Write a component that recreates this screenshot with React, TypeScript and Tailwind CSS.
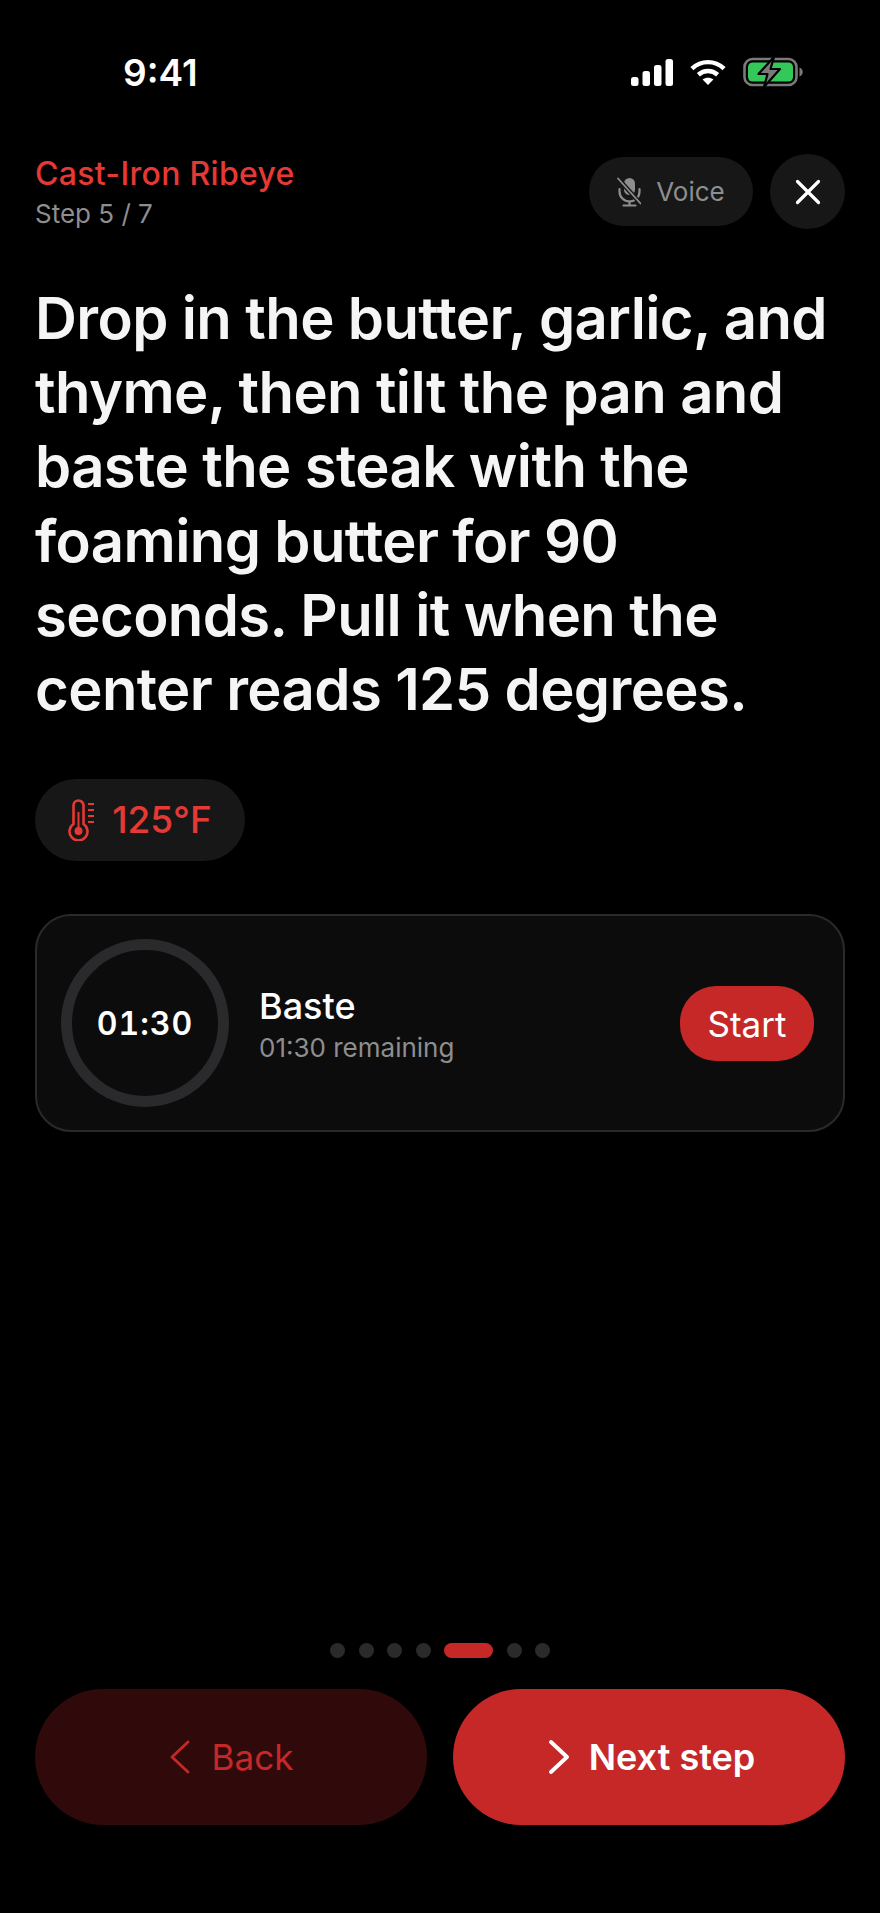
import React from 'react';

const font = { fontFamily: 'Inter, sans-serif' };

const SignalIcon = () => (
  <svg width="42" height="27" viewBox="0 0 42 27" fill="#fff">
    <rect x="0" y="18" width="7.500" height="9" rx="2.500" />
    <rect x="11.500" y="12" width="7.500" height="15" rx="2.500" />
    <rect x="23" y="6" width="7.500" height="21" rx="2.500" />
    <rect x="34.500" y="0" width="7.500" height="27" rx="2.500" />
  </svg>
);

const WifiIcon = () => (
  <svg width="36" height="27" viewBox="0 0 37 27" fill="none" stroke="#fff" strokeWidth="4.600">
    <path d="M2 9.500C11.500 .6 25.500 .6 35 9.500" />
    <path d="M8.600 15.800c5.800-5.200 14-5.200 19.800 0" />
    <path d="M18.500 26.400l-5.600-5.800c3.300-2.400 7.900-2.400 11.200 0z" fill="#fff" stroke="none" />
  </svg>
);

const BatteryIcon = () => (
  <svg width="60" height="30" viewBox="0 0 60 30">
    <rect x="1.500" y="2" width="52" height="26" rx="8" fill="none" stroke="#7a7a7a" strokeWidth="2.600" />
    <rect x="5" y="5.500" width="45" height="19" rx="4.500" fill="#34c759" />
    <path d="M56.500 10.500c2 .6 3.200 2.400 3.200 4.500s-1.200 3.900-3.200 4.500z" fill="#7a7a7a" />
    <path d="M31 0L15.500 17h9L21 30l16-18h-9.500z" fill="#7a7a7a" stroke="#000" strokeWidth="2.200" strokeLinejoin="round" />
  </svg>
);

const MicSlashIcon = () => (
  <svg width="24" height="30" viewBox="0 0 24 30" fill="none" stroke="#8e8e8e" strokeLinecap="round">
    <rect x="7" y="1" width="11" height="17" rx="5.500" fill="#8e8e8e" stroke="none" />
    <path d="M2.500 12v2.500a10 10 0 0 0 20 0V12" strokeWidth="2.200" />
    <path d="M12.500 24.500v3M6.500 28.500h12" strokeWidth="2.200" />
    <path d="M1 1.500l22.500 25" stroke="#171717" strokeWidth="4.500" />
    <path d="M1 1.500l22.500 25" strokeWidth="1.800" />
  </svg>
);

const CloseIcon = () => (
  <svg width="26" height="26" viewBox="0 0 26 26" fill="none" stroke="#fff" strokeWidth="3.200" strokeLinecap="round">
    <path d="M2.500 2.500l21 21M23.500 2.500l-21 21" />
  </svg>
);

const ThermometerIcon = () => (
  <svg width="27" height="42" viewBox="0 0 27 42" fill="none" stroke="#e53935" strokeWidth="2.600">
    <path d="M5.500 25V6.500a5 5 0 0 1 10 0V25a9 9 0 1 1-10 0z" />
    <circle cx="10.500" cy="32" r="4" fill="#e53935" stroke="none" />
    <path d="M10.500 30V13" strokeWidth="2" />
    <path d="M20 5h6M20 11h6M20 17h6M20 23h6" strokeWidth="2.200" />
  </svg>
);

const TOTAL_STEPS = 7;
const CURRENT_STEP = 5;

const App: React.FC = () => {
  return (
    <div className="w-[880px] h-[1913px] bg-black flex flex-col overflow-hidden" style={font}>
      {/* status bar */}
      <div className="h-[144px] pl-[123px] pr-[77px] pt-[48px] flex items-start justify-between shrink-0">
        <span className="text-[37px] leading-[50px] font-semibold text-white">9:41</span>
        <div className="flex items-center gap-[17px] h-[48px]">
          <SignalIcon />
          <WifiIcon />
          <BatteryIcon />
        </div>
      </div>

      <div className="px-[35px] flex-1 flex flex-col">
        {/* header */}
        <div className="flex items-start justify-between h-[76px] mt-[10px]">
          <div className="pt-[1px]">
            <div className="text-[32px] leading-[38px] font-medium text-[#e53935] tracking-[0.3px]">Cast-Iron Ribeye</div>
            <div className="text-[26px] leading-[42px] text-[#8e8e8e]">Step 5 / 7</div>
          </div>
          <div className="flex items-center gap-[17px]">
            <div className="h-[69px] w-[164px] rounded-full bg-[#171717] flex items-center justify-center gap-[15px]">
              <MicSlashIcon />
              <span className="text-[26px] text-[#8e8e8e]">Voice</span>
            </div>
            <div className="w-[75px] h-[75px] rounded-full bg-[#171717] flex items-center justify-center">
              <CloseIcon />
            </div>
          </div>
        </div>

        {/* instruction */}
        <h1 className="mt-[51px] text-[58px] leading-[74.2px] font-semibold tracking-[-0.6px] text-[#f5f5f5]">
          Drop in the butter, garlic, and thyme, then tilt the pan and baste the steak with the foaming butter for 90 seconds. Pull it when the center reads 125 degrees.
        </h1>

        {/* temp chip */}
        <div className="mt-[53px] self-start h-[82px] w-[210px] rounded-full bg-[#171717] flex items-center justify-center gap-[17px]">
          <ThermometerIcon />
          <span className="text-[37px] font-medium text-[#e53935]">125°F</span>
        </div>

        {/* timer card */}
        <div className="mt-[53px] h-[218px] rounded-[36px] border-2 border-[#2a2a2a] bg-[#0c0c0c] pl-[24px] pr-[29px] flex items-center">
          <div className="w-[168px] h-[168px] rounded-full border-[11px] border-[#2a2a2c] flex items-center justify-center">
            <span className="text-[32px] pt-[2px] font-semibold text-white tabular-nums tracking-[1px]">01:30</span>
          </div>
          <div className="ml-[30px] flex-1 pt-[3px]">
            <div className="text-[36px] leading-[46px] font-medium text-white">Baste</div>
            <div className="text-[26px] leading-[37px] text-[#8e8e8e]">01:30 remaining</div>
          </div>
          <div className="w-[134px] h-[75px] rounded-[36px] bg-[#c62828] flex items-center justify-center pt-[2px] text-[35px] text-white">
            Start
          </div>
        </div>

        {/* page dots */}
        <div className="mt-auto flex items-center justify-center gap-[13.500px]">
          {Array.from({ length: TOTAL_STEPS }).map((_, i) =>
            i + 1 === CURRENT_STEP ? (
              <div key={i} className="w-[49px] h-[15px] rounded-full bg-[#c62828]" />
            ) : (
              <div key={i} className="w-[15px] h-[15px] rounded-full bg-[#2a2a2a]" />
            )
          )}
        </div>

        {/* nav buttons */}
        <div className="mt-[31px] mb-[88px] grid grid-cols-2 gap-[26px]">
          <div className="h-[136px] rounded-[68px] bg-[#300a0a] flex items-center justify-center gap-[21px]">
            <svg width="22" height="34" viewBox="0 0 22 34" fill="none" stroke="#c62828" strokeWidth="2.800" strokeLinecap="round" strokeLinejoin="round">
              <path d="M19 2L3 17l16 15" />
            </svg>
            <span className="text-[35px] text-[#c62828]">Back</span>
          </div>
          <div className="h-[136px] rounded-[68px] bg-[#c62828] flex items-center justify-center gap-[19px] pl-[5px]">
            <svg width="22" height="34" viewBox="0 0 22 34" fill="none" stroke="#fff" strokeWidth="3.800" strokeLinecap="round" strokeLinejoin="round">
              <path d="M3 2l16 15L3 32" />
            </svg>
            <span className="text-[36px] font-semibold text-white">Next step</span>
          </div>
        </div>
      </div>
    </div>
  );
};

export default App;
